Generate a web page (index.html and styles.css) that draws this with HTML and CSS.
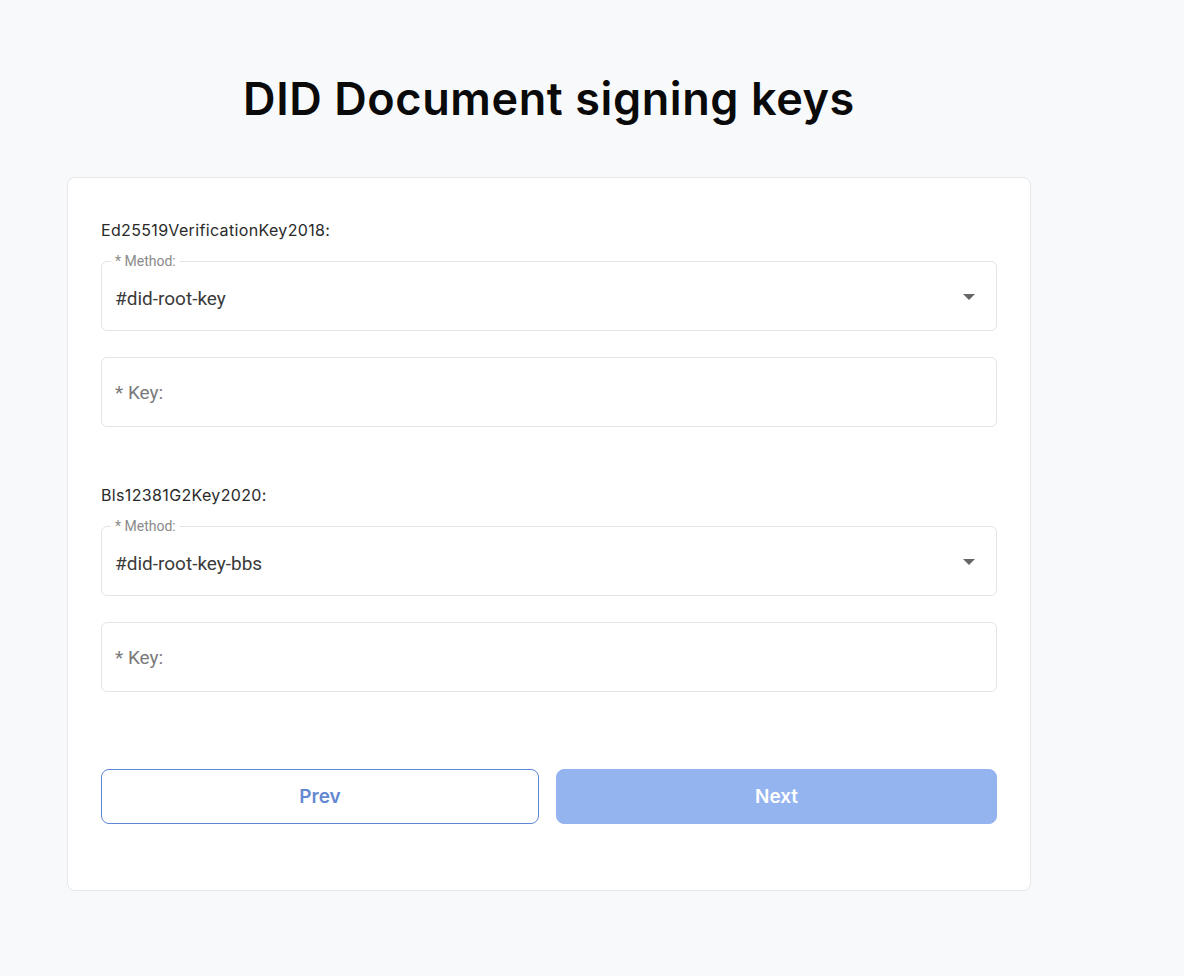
FILE: index.html
```html
<!DOCTYPE html>
<html lang="en">
<head>
<meta charset="utf-8">
<title>DID Document signing keys</title>
<link rel="stylesheet" href="styles.css">
</head>
<body>
<main class="page">
  <h1 class="title">DID Document signing keys</h1>
  <section class="card">
    <div class="group">
      <div class="group-label">Ed25519VerificationKey2018:</div>
      <div class="field select">
        <span class="legend">* Method:</span>
        <span class="value">#did-root-key</span>
        <span class="caret"></span>
      </div>
      <div class="field key">
        <span class="placeholder">* Key:</span>
      </div>
    </div>
    <div class="group">
      <div class="group-label">Bls12381G2Key2020:</div>
      <div class="field select">
        <span class="legend">* Method:</span>
        <span class="value">#did-root-key-bbs</span>
        <span class="caret"></span>
      </div>
      <div class="field key">
        <span class="placeholder">* Key:</span>
      </div>
    </div>
    <div class="actions">
      <button class="btn btn-outline">Prev</button>
      <button class="btn btn-primary">Next</button>
    </div>
  </section>
</main>
</body>
</html>
```
FILE: styles.css
```css
* { box-sizing: border-box; }
html, body { margin: 0; padding: 0; }
body {
  background: #f8f9fb;
  font-family: Roboto, "Liberation Sans", Arial, sans-serif;
  width: 1184px;
  min-height: 976px;
}
.page {
  width: 964px;
  margin-left: 67px;
  padding-top: 70px;
}
.title {
  margin: 0;
  text-align: center;
  font-family: Inter, "Noto Sans", sans-serif;
  font-weight: 600;
  font-size: 45px;
  line-height: 58px;
  color: #0a0a0a;
  letter-spacing: 0.6px;
}
.card {
  margin-top: 49px;
  background: #fff;
  border: 1px solid #e6e8ec;
  border-radius: 8px;
  padding: 43px 33px 66px;
}
.group { margin-bottom: 59px; }
.group:nth-of-type(2) { margin-bottom: 77px; }
.group-label {
  font-family: Inter, "Noto Sans", sans-serif;
  font-size: 16px;
  line-height: 18px;
  letter-spacing: 0.35px;
  color: #2a2a2a;
  margin-bottom: 22px;
}
.field {
  position: relative;
  height: 70px;
  border: 1px solid #e2e4e8;
  border-radius: 6px;
  display: flex;
  align-items: center;
  padding: 0 13px;
}
.field + .field { margin-top: 26px; }
.select .value {
  font-size: 19px;
  color: #3a3a3a;
  padding-top: 4px;
}
.legend {
  position: absolute;
  top: -9px;
  left: 9px;
  padding: 0 4px;
  background: #fff;
  font-size: 14px;
  line-height: 16px;
  color: #8a8a8a;
}
.caret {
  position: absolute;
  right: 21px;
  top: 32px;
  width: 0;
  height: 0;
  border-left: 6px solid transparent;
  border-right: 6px solid transparent;
  border-top: 6px solid #666;
}
.placeholder {
  font-size: 19px;
  color: #7a7a7a;
}
.actions {
  display: grid;
  grid-template-columns: 438px 1fr;
  gap: 17px;
}
.btn {
  height: 55px;
  border-radius: 8px;
  font-family: Inter, Roboto, sans-serif;
  font-size: 19px;
  font-weight: 600;
  cursor: pointer;
}
.btn-outline {
  background: #fff;
  border: 1px solid #5d86d4;
  color: #6489d2;
}
.btn-primary {
  background: #94b4f0;
  border: 1px solid #94b4f0;
  color: #fff;
}
```
